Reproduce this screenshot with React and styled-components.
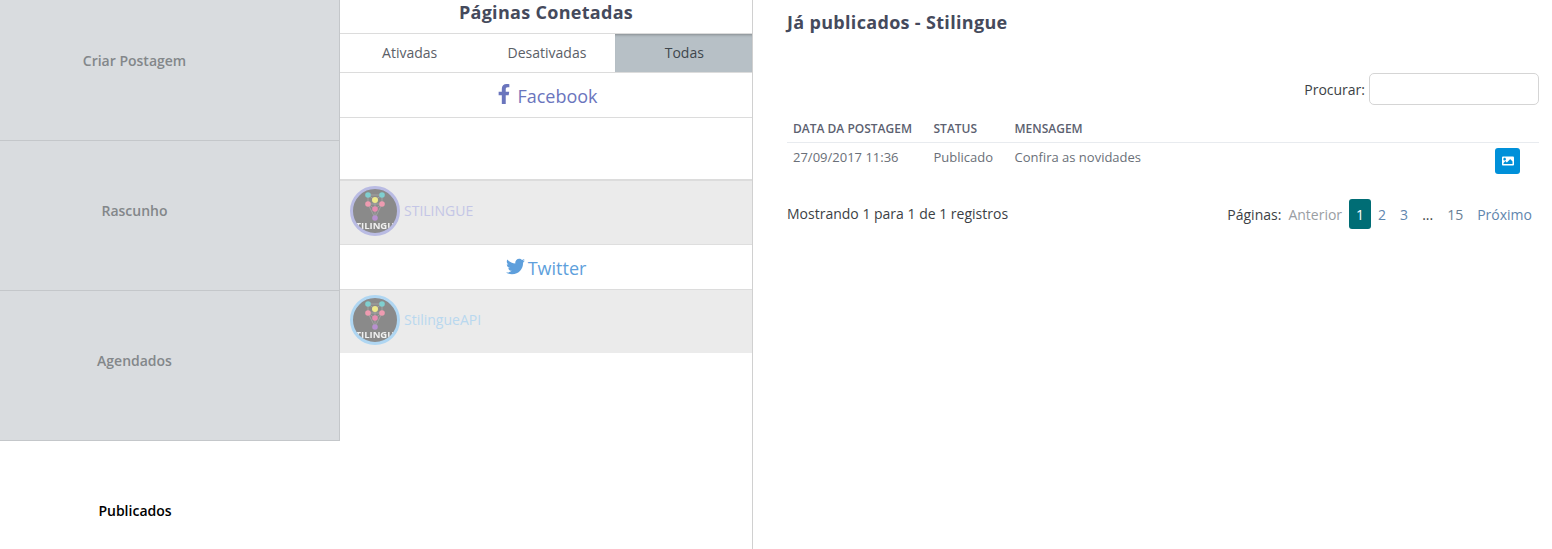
import React from "react";
import styled, { createGlobalStyle } from "styled-components";
import { FaFacebookF, FaTwitter, FaImage } from "react-icons/fa";

const Global = createGlobalStyle`
  html, body { margin: 0; padding: 0; background: #fff; height: 100%; overflow: hidden; }
  body { font-family: "Open Sans", "Liberation Sans", sans-serif; }
`;

const Page = styled.div`
  display: flex;
  width: 1552px;
  height: 549px;
  overflow: hidden;
`;

const Sidebar = styled.nav`
  width: 340px;
  flex: none;
  margin-top: -9px;
`;

const SideItem = styled.div`
  height: 150px;
  box-sizing: border-box;
  padding: 0 70px ${(p) => (p.$active ? 12 : 10)}px 0;
  display: flex;
  align-items: center;
  justify-content: center;
  font-size: 14px;
  font-weight: 600;
  color: ${(p) => (p.$active ? "#000" : "#83878a")};
  background: ${(p) => (p.$active ? "#fff" : "#d9dcdf")};
  border-right: ${(p) => (p.$active ? "none" : "1px solid #c4c7ca")};
  border-bottom: ${(p) => (p.$active ? "none" : "1px solid #c4c7ca")};
`;

const Pages = styled.section`
  width: 413px;
  flex: none;
  box-sizing: border-box;
  border-right: 1px solid #d0d0d0;
`;

const PagesTitle = styled.h2`
  margin: 0;
  height: 33px;
  box-sizing: border-box;
  text-align: center;
  font-size: 18px;
  line-height: 25px;
  font-weight: 700;
  letter-spacing: 0.3px;
  color: #454a5c;
`;

const Tabs = styled.div`
  display: grid;
  grid-template-columns: repeat(3, 1fr);
  height: 40px;
  box-sizing: border-box;
  border-top: 1px solid #dcdcdc;
  border-bottom: 1px solid #dcdcdc;
`;

const Tab = styled.div`
  display: flex;
  align-items: center;
  justify-content: center;
  padding: 0 0 2px 2px;
  font-size: 14px;
  color: ${(p) => (p.$active ? "#3f474d" : "#5b6067")};
  background: ${(p) => (p.$active ? "#b7c0c6" : "transparent")};
  box-shadow: ${(p) => (p.$active ? "inset 0 3px 3px -2px rgba(0,0,0,.28)" : "none")};
`;

const Network = styled.div`
  display: flex;
  align-items: center;
  justify-content: center;
  gap: ${(p) => p.$gap}px;
  height: ${(p) => p.$h}px;
  box-sizing: border-box;
  padding-top: 2px;
  font-size: 18px;
  color: ${(p) => p.$color};
  border-bottom: 1px solid #dcdcdc;
  svg { font-size: ${(p) => p.$icon}px; position: relative; top: -2px; }
`;

const Spacer = styled.div`
  height: 63px;
  box-sizing: border-box;
  border-bottom: 2px solid #dcdcdc;
`;

const Account = styled.div`
  display: flex;
  align-items: center;
  gap: 4px;
  height: ${(p) => p.$h}px;
  box-sizing: border-box;
  padding: 0 0 ${(p) => (p.$line ? 4 : 3)}px 10px;
  background: #ebebeb;
  border-bottom: ${(p) => (p.$line ? "1px solid #dedede" : "none")};
  font-size: 14px;
  color: ${(p) => p.$color};
`;

const AccountName = styled.span`
  position: relative;
  top: ${(p) => p.$shift}px;
`;

const AvatarRing = styled.div`
  width: 50px;
  height: 50px;
  flex: none;
  box-sizing: border-box;
  border-radius: 50%;
  border: 3px solid ${(p) => p.$color};
  overflow: hidden;
  background: #8a8a8a;
`;

const Avatar = ({ color }) => (
  <AvatarRing $color={color}>
    <svg width="44" height="44" viewBox="0 0 44 44" style={{ display: "block", filter: "blur(.35px)" }}>
      <g stroke="#a8a8a8" strokeWidth=".8" fill="none">
        <path d="M15 6L29 6L22 11ZM15 6L15 15L22 20L29 15L29 6M15 15L29 15M22 11L22 29M15 15L22 29L29 15" />
      </g>
      <circle cx="15" cy="6" r="2.8" fill="#7fcfd0" />
      <circle cx="29" cy="6" r="2.8" fill="#7fcfd0" />
      <circle cx="22" cy="11" r="3" fill="#eee98b" />
      <circle cx="15" cy="15" r="2.8" fill="#ee9bb0" />
      <circle cx="29" cy="15" r="2.8" fill="#ee9bb0" />
      <circle cx="22" cy="20" r="2.8" fill="#e88cb0" />
      <circle cx="22" cy="29" r="2.8" fill="#b790cf" />
      <text x="22" y="39.5" textAnchor="middle" fontSize="9.5" fontWeight="700" fill="#f0f0f0" fontFamily="Open Sans">STILINGUE</text>
    </svg>
  </AvatarRing>
);

const Main = styled.main`
  flex: 1;
  box-sizing: border-box;
  padding: 10px 13px 0 34px;
`;

const Heading = styled.h1`
  margin: 0;
  font-size: 18px;
  line-height: 24px;
  font-weight: 700;
  letter-spacing: 0.32px;
  color: #454a5c;
`;

const SearchRow = styled.label`
  display: flex;
  justify-content: flex-end;
  align-items: center;
  gap: 4px;
  margin-top: 39px;
  font-size: 14px;
  color: #3c3f45;
`;

const SearchInput = styled.input`
  width: 170px;
  height: 32px;
  box-sizing: border-box;
  border: 1px solid #d5d5d5;
  border-radius: 5px;
  background: #fff;
  outline: none;
`;

const Table = styled.div`
  margin-top: 11px;
`;

const TableRow = styled.div`
  display: grid;
  grid-template-columns: 140.5px 81px 1fr 44px;
  box-sizing: border-box;
  padding: 0 0 ${(p) => (p.$head ? 2 : 0)}px 6px;
  height: ${(p) => p.$h}px;
  align-items: ${(p) => (p.$head ? "center" : "start")};
  border-bottom: ${(p) => (p.$head ? "1px solid #e8ebef" : "none")};
`;

const Th = styled.div`
  font-size: 12px;
  font-weight: 600;
  color: #5c6170;
`;

const Td = styled.div`
  font-size: 13px;
  line-height: 18px;
  padding-top: 5px;
  color: #6a6f78;
`;

const ImageButton = styled.button`
  width: 25px;
  height: 26px;
  margin-top: 5px;
  padding: 0;
  border: none;
  border-radius: 3px;
  background: #0090d9;
  color: #fff;
  display: flex;
  align-items: center;
  justify-content: center;
  font-size: 12px;
`;

const Footer = styled.div`
  display: flex;
  justify-content: space-between;
  align-items: center;
  height: 30px;
`;

const Info = styled.div`
  font-size: 14px;
  padding-bottom: 2px;
  color: #3c3f45;
`;

const Pager = styled.div`
  display: flex;
  align-items: center;
  font-size: 14px;
  color: #3c3f45;
`;

const PageLink = styled.span`
  height: 30px;
  display: flex;
  align-items: center;
  justify-content: center;
  box-sizing: border-box;
  padding: 0 7px;
  border-radius: 3px;
  color: ${(p) => (p.$current ? "#fff" : p.$color || "#5f86ae")};
  background: ${(p) => (p.$current ? "#006d75" : "transparent")};
`;

export default function App() {
  return (
    <Page>
      <Global />
      <Sidebar>
        <SideItem>Criar Postagem</SideItem>
        <SideItem>Rascunho</SideItem>
        <SideItem>Agendados</SideItem>
        <SideItem $active>Publicados</SideItem>
      </Sidebar>
      <Pages>
        <PagesTitle>Páginas Conetadas</PagesTitle>
        <Tabs>
          <Tab>Ativadas</Tab>
          <Tab>Desativadas</Tab>
          <Tab $active>Todas</Tab>
        </Tabs>
        <Network $h={45} $color="#6a75bd" $icon={20} $gap={3}>
          <FaFacebookF />
          Facebook
        </Network>
        <Spacer />
        <Account $h={64} $color="#c4c6e6" $line>
          <Avatar color="#b9bbe3" />
          <AccountName $shift={0}>STILINGUE</AccountName>
        </Account>
        <Network $h={45} $color="#5e9fdc" $icon={19} $gap={3}>
          <FaTwitter />
          Twitter
        </Network>
        <Account $h={63} $color="#b9d8ef">
          <Avatar color="#afd6f2" />
          <AccountName $shift={-1}>StilingueAPI</AccountName>
        </Account>
      </Pages>
      <Main>
        <Heading>Já publicados - Stilingue</Heading>
        <SearchRow>
          Procurar:
          <SearchInput />
        </SearchRow>
        <Table>
          <TableRow $head $h={27}>
            <Th>DATA DA POSTAGEM</Th>
            <Th>STATUS</Th>
            <Th>MENSAGEM</Th>
            <span />
          </TableRow>
          <TableRow $h={56}>
            <Td>27/09/2017 11:36</Td>
            <Td>Publicado</Td>
            <Td>Confira as novidades</Td>
            <ImageButton aria-label="Imagem">
              <FaImage />
            </ImageButton>
          </TableRow>
        </Table>
        <Footer>
          <Info>Mostrando 1 para 1 de 1 registros</Info>
          <Pager>
            <span>Páginas:</span>
            <PageLink $color="#9a9ea3">Anterior</PageLink>
            <PageLink $current>1</PageLink>
            <PageLink>2</PageLink>
            <PageLink>3</PageLink>
            <PageLink $color="#3c3f45">...</PageLink>
            <PageLink $color="#6a7f94">15</PageLink>
            <PageLink>Próximo</PageLink>
          </Pager>
        </Footer>
      </Main>
    </Page>
  );
}
